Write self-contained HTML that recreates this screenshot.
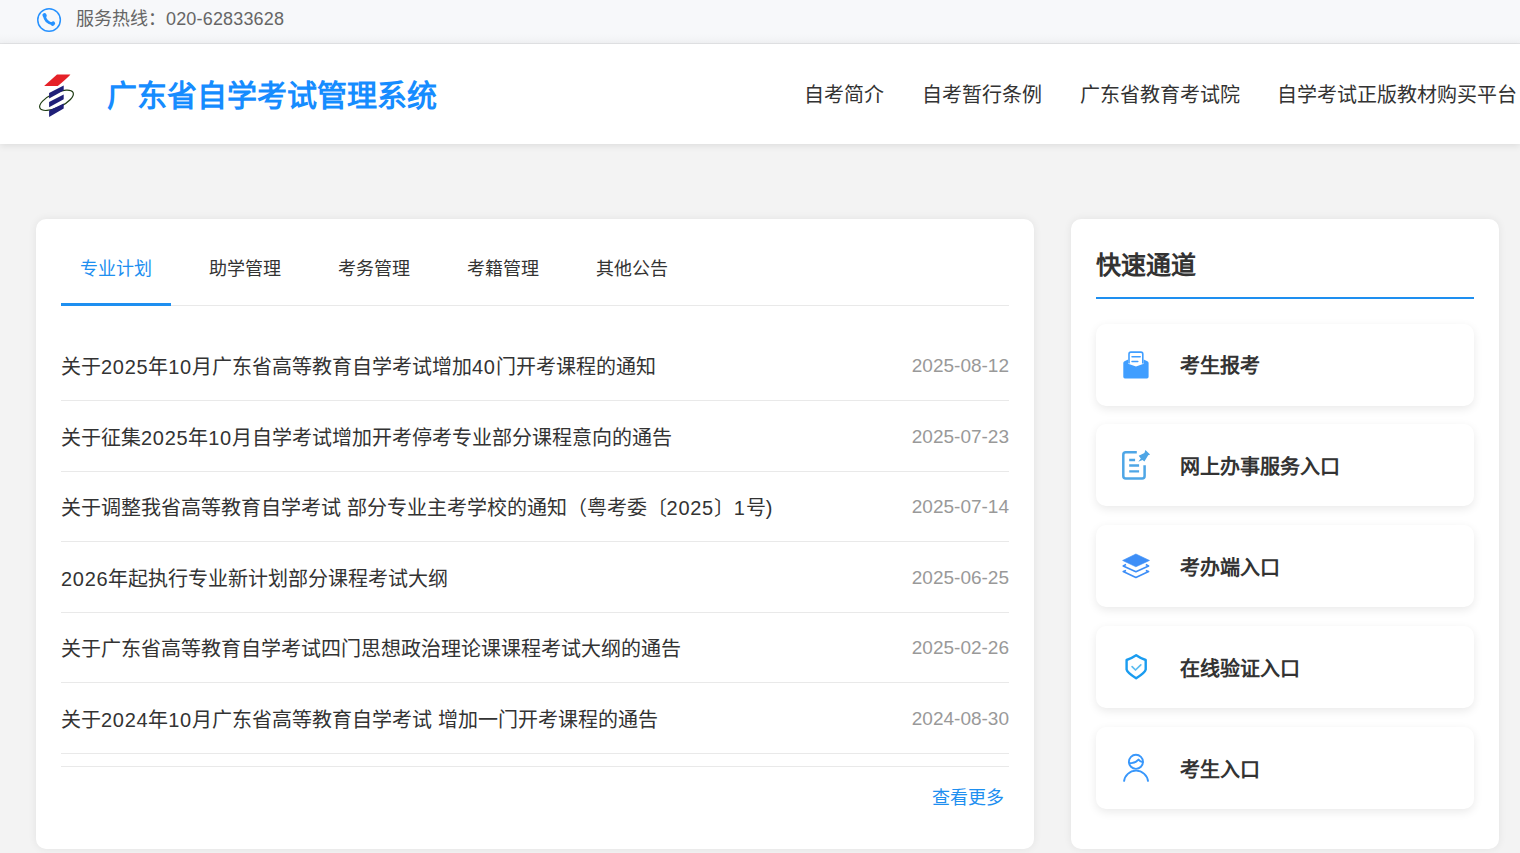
<!DOCTYPE html>
<html lang="zh-CN">
<head>
<meta charset="utf-8">
<style>
*{margin:0;padding:0;box-sizing:border-box}
html,body{width:1520px;height:853px;overflow:hidden}
body{background:#f3f3f3;font-family:"Liberation Sans",sans-serif;color:#333;position:relative}
.abs{position:absolute;white-space:nowrap}
#topbar{position:absolute;left:0;top:0;width:1520px;height:44px;background:linear-gradient(#f7f8fa 0,#f7f8fa 34px,#f1f2f4 43px);border-bottom:1px solid #e3e4e6}
#header{position:absolute;left:0;top:44px;width:1520px;height:100px;background:#fff;box-shadow:0 2px 7px rgba(0,0,0,0.09)}
.card{position:absolute;top:219px;height:630px;background:#fff;border-radius:10px;box-shadow:0 0 9px rgba(0,0,0,0.07)}
#left{left:36px;width:998px}
#right{left:1071px;width:428px}
.t18{font-size:18px;line-height:24px}
.t20{font-size:20px;line-height:26px}
.nav{color:#333}
.tab{color:#333}
.tab.on{color:#1e8ff0}
.sep{position:absolute;left:61px;width:948px;height:1px;background:#e9e9e9}
.row{left:61px;color:#333}
.date{color:#999;font-size:19px;line-height:26px;right:511px;text-align:right}
.item{position:absolute;left:1096px;width:378px;height:82px;background:#fff;border-radius:10px;box-shadow:0 3px 10px rgba(0,0,0,0.085)}
.dg{letter-spacing:0.7px}
.itxt{font-size:20px;line-height:26px;font-weight:bold;color:#333}
</style>
</head>
<body>
<div id="topbar"></div>
<div id="header"></div>
<div class="card" id="left"></div>
<div class="card" id="right"></div>

<!-- topbar -->
<svg class="abs" style="left:0;top:0" width="70" height="40" viewBox="0 0 70 40">
  <circle cx="49.05" cy="19.95" r="11.3" fill="none" stroke="#2792ff" stroke-width="1.5"/>
  <path d="M44.4 15.6 Q45.2 22.6 52.7 23.8" fill="none" stroke="#2792ff" stroke-width="2.8" stroke-linecap="round"/>
  <ellipse cx="44.6" cy="15.4" rx="2.1" ry="2.3" transform="rotate(-35 44.6 15.4)" fill="#2792ff"/>
  <ellipse cx="52.9" cy="23.6" rx="2.3" ry="2.1" transform="rotate(-35 52.9 23.6)" fill="#2792ff"/>
</svg>
<div class="abs t18" style="left:76px;top:7px;color:#666">服务热线：<span style="letter-spacing:0.17px">020-62833628</span></div>

<!-- header -->
<svg class="abs" style="left:0;top:60px" width="100" height="70" viewBox="0 60 100 70">
  <path d="M57 74.4 L70.4 74.4 Q68.5 77 57.8 85.9 L44.1 85.9 Z" fill="#e52128"/>
  <ellipse cx="56.5" cy="100.3" rx="18.3" ry="7.3" transform="rotate(-25 56.5 100.3)" fill="none" stroke="#1f3d14" stroke-width="1.2"/>
  <path d="M49.1 93.1 L63.7 85.5 L63.7 90.5 L49.1 98.4 Z M49.1 101.9 L63.7 94.4 L63.7 99.3 L49.1 107.3 Z M49.1 110.6 L63.7 103.4 L63.7 108.6 L49.1 116.9 Z" fill="#1f1f78"/>
</svg>
<div class="abs" style="left:107px;top:76px;font-size:30px;line-height:40px;font-weight:bold;color:#168cff">广东省自学考试管理系统</div>

<div class="abs t20 nav" style="left:804px;top:82px">自考简介</div>
<div class="abs t20 nav" style="left:922px;top:82px">自考暂行条例</div>
<div class="abs t20 nav" style="left:1080px;top:82px">广东省教育考试院</div>
<div class="abs t20 nav" style="left:1277px;top:82px">自学考试正版教材购买平台</div>

<!-- tabs -->
<div class="sep" style="top:305px"></div>
<div class="abs" style="left:61px;top:303px;width:110px;height:3px;background:#1e8ff0"></div>
<div class="abs t18 tab on" style="left:80px;top:257px">专业计划</div>
<div class="abs t18 tab" style="left:209px;top:257px">助学管理</div>
<div class="abs t18 tab" style="left:338px;top:257px">考务管理</div>
<div class="abs t18 tab" style="left:467px;top:257px">考籍管理</div>
<div class="abs t18 tab" style="left:596px;top:257px">其他公告</div>

<!-- rows -->
<div class="abs t20 row" style="top:354px">关于<span class="dg">2025</span>年<span class="dg">10</span>月广东省高等教育自学考试增加<span class="dg">40</span>门开考课程的通知</div>
<div class="abs date" style="top:353px">2025-08-12</div>
<div class="sep" style="top:400px"></div>
<div class="abs t20 row" style="top:425px">关于征集<span class="dg">2025</span>年<span class="dg">10</span>月自学考试增加开考停考专业部分课程意向的通告</div>
<div class="abs date" style="top:424px">2025-07-23</div>
<div class="sep" style="top:471px"></div>
<div class="abs t20 row" style="top:495px">关于调整我省高等教育自学考试 部分专业主考学校的通知（粤考委〔<span class="dg">2025</span>〕<span class="dg">1</span>号)</div>
<div class="abs date" style="top:494px">2025-07-14</div>
<div class="sep" style="top:541px"></div>
<div class="abs t20 row" style="top:566px"><span class="dg">2026</span>年起执行专业新计划部分课程考试大纲</div>
<div class="abs date" style="top:565px">2025-06-25</div>
<div class="sep" style="top:612px"></div>
<div class="abs t20 row" style="top:636px">关于广东省高等教育自学考试四门思想政治理论课课程考试大纲的通告</div>
<div class="abs date" style="top:635px">2025-02-26</div>
<div class="sep" style="top:682px"></div>
<div class="abs t20 row" style="top:707px">关于<span class="dg">2024</span>年<span class="dg">10</span>月广东省高等教育自学考试 增加一门开考课程的通告</div>
<div class="abs date" style="top:706px">2024-08-30</div>
<div class="sep" style="top:753px"></div>
<div class="sep" style="top:766px"></div>
<div class="abs t18" style="left:932px;top:786px;color:#1e8ff0">查看更多</div>

<!-- right -->
<div class="abs" style="left:1096px;top:249px;font-size:25px;line-height:32px;font-weight:bold;color:#333">快速通道</div>
<div class="abs" style="left:1096px;top:297px;width:378px;height:2px;background:#1e8ff0"></div>

<div class="item" style="top:324px"></div>
<div class="item" style="top:424px"></div>
<div class="item" style="top:525px"></div>
<div class="item" style="top:626px"></div>
<div class="item" style="top:727px"></div>

<div class="abs itxt" style="left:1180px;top:353px">考生报考</div>
<div class="abs itxt" style="left:1180px;top:454px">网上办事服务入口</div>
<div class="abs itxt" style="left:1180px;top:555px">考办端入口</div>
<div class="abs itxt" style="left:1180px;top:656px">在线验证入口</div>
<div class="abs itxt" style="left:1180px;top:757px">考生入口</div>

<svg class="abs" style="left:1118px;top:346px" width="36" height="36" viewBox="0 0 36 36">
  <path d="M6.5 15.3 L10.1 13.6 L10.1 17.7 L18 20.6 L25.7 17.7 L25.7 13.6 L29.4 15.3 Q30.6 15.9 30.6 17 L30.6 30.8 Q30.6 32.4 29 32.4 L6.9 32.4 Q5.3 32.4 5.3 30.8 L5.3 17 Q5.3 15.9 6.5 15.3 Z" fill="#409eff"/>
  <path d="M11 17.6 L11 8 Q11 6.1 12.9 6.1 L22.9 6.1 Q24.8 6.1 24.8 8 L24.8 17.6" fill="none" stroke="#409eff" stroke-width="1.6"/>
  <path d="M14 10.8 H22.2 M14 15.4 H19.8" stroke="#409eff" stroke-width="1.5" stroke-linecap="round"/>
</svg>
<svg class="abs" style="left:1118px;top:447px" width="36" height="36" viewBox="0 0 36 36">
  <path d="M18.8 5.3 H7.8 Q5.3 5.3 5.3 7.8 V28.9 Q5.3 31.4 7.8 31.4 H24.1 Q26.6 31.4 26.6 28.9 V18.2" fill="none" stroke="#4ea6e6" stroke-width="2.5"/>
  <path d="M11.2 13 H17.1 M11.2 18.5 H21.1 M11.2 24.4 H21.1" stroke="#4ea6e6" stroke-width="2.4"/>
  <path d="M27.4 2.95 L32.1 7.4 L30.2 8.2 L26.4 14.6 L24.5 12.9 L20.3 14.8 L22.8 11.6 L20.7 8.65 L26.4 5.9 Z" fill="#4ea6e6"/>
</svg>
<svg class="abs" style="left:1118px;top:548px" width="36" height="36" viewBox="0 0 36 36">
  <path d="M4.6 12.45 L17.9 6 L31.5 12.45 L17.9 18.8 Z" fill="#3d8ef7" stroke="#3d8ef7" stroke-width="0.6" stroke-linejoin="round"/>
  <path d="M8 16.6 L5.2 17.9 L17.9 23.8 L30.6 17.9 L27.8 16.6" fill="none" stroke="#3d8ef7" stroke-width="1.6" stroke-linejoin="round"/>
  <path d="M8 22.5 L5.2 23.5 L17.9 29.4 L30.6 23.5 L27.8 22.5" fill="none" stroke="#3d8ef7" stroke-width="1.6" stroke-linejoin="round"/>
</svg>
<svg class="abs" style="left:1118px;top:649px" width="36" height="36" viewBox="0 0 36 36">
  <path d="M18.15 6.3 Q13.5 9.5 8.6 11 V20.5 Q9.2 23.6 18.15 29.3 Q27.1 23.6 27.7 20.5 V11 Q22.8 9.5 18.15 6.3 Z" fill="none" stroke="#1a9cf0" stroke-width="2.4" stroke-linejoin="round"/>
  <path d="M14.1 17.7 L17.5 21 L22.8 15.8" fill="none" stroke="#5bbcf0" stroke-width="1.7" stroke-linecap="round" stroke-linejoin="round"/>
</svg>
<svg class="abs" style="left:1118px;top:750px" width="36" height="36" viewBox="0 0 36 36">
  <circle cx="17.95" cy="11.8" r="7.05" fill="none" stroke="#3897fb" stroke-width="1.9"/>
  <path d="M10.8 12.8 Q16.5 14.2 20.5 9.6 Q22 12 25 12.2" fill="none" stroke="#3897fb" stroke-width="1.9" stroke-linejoin="round"/>
  <path d="M5.95 31.7 A12.15 12.15 0 0 1 30.15 31.7" fill="none" stroke="#3897fb" stroke-width="1.9"/>
</svg>

</body>
</html>
